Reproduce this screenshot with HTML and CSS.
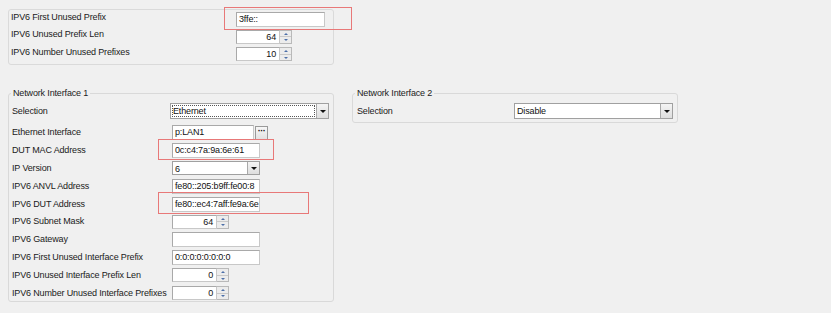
FILE: index.html
```html
<!DOCTYPE html>
<html>
<head>
<meta charset="utf-8">
<link rel="stylesheet" href="styles.css">
</head>
<body>
<div class="page">
  <div class="panel">
    <div class="row prow first">
      <span class="lbl plbl">IPV6 First Unused Prefix</span>
      <span class="field wide">3ffe::</span>
    </div>
    <div class="row prow">
      <span class="lbl plbl">IPV6 Unused Prefix Len</span>
      <span class="spin"><span class="field num">64</span><span class="spinbtns"><i class="up"></i><i class="dn"></i></span></span>
    </div>
    <div class="row prow">
      <span class="lbl plbl">IPV6 Number Unused Prefixes</span>
      <span class="spin"><span class="field num">10</span><span class="spinbtns"><i class="up"></i><i class="dn"></i></span></span>
    </div>
  </div>

  <div class="groups">
    <fieldset class="group g1">
      <legend>Network Interface 1</legend>
      <div class="row selrow">
        <span class="lbl lbl1 narrow">Selection</span>
        <span class="combo"><span class="combotext focus">Ethernet</span><span class="arrowbtn"><i></i></span></span>
      </div>
      <div class="rows">
        <div class="row grow">
          <span class="lbl lbl1">Ethernet Interface</span>
          <span class="field eth">p:LAN1</span><span class="dots">&middot;&middot;&middot;</span>
        </div>
        <div class="row grow">
          <span class="lbl lbl1">DUT MAC Address</span>
          <span class="field mid">0c:c4:7a:9a:6e:61</span>
        </div>
        <div class="row grow">
          <span class="lbl lbl1">IP Version</span>
          <span class="combo small"><span class="combotext">6</span><span class="arrowbtn"><i></i></span></span>
        </div>
        <div class="row grow">
          <span class="lbl lbl1">IPV6 ANVL Address</span>
          <span class="field mid">fe80::205:b9ff:fe00:8</span>
        </div>
        <div class="row grow">
          <span class="lbl lbl1">IPV6 DUT Address</span>
          <span class="field mid">fe80::ec4:7aff:fe9a:6e</span>
        </div>
        <div class="row grow">
          <span class="lbl lbl1">IPV6 Subnet Mask</span>
          <span class="spin"><span class="field num">64</span><span class="spinbtns"><i class="up"></i><i class="dn"></i></span></span>
        </div>
        <div class="row grow">
          <span class="lbl lbl1">IPV6 Gateway</span>
          <span class="field mid"></span>
        </div>
        <div class="row grow">
          <span class="lbl lbl1">IPV6 First Unused Interface Prefix</span>
          <span class="field mid">0:0:0:0:0:0:0:0</span>
        </div>
        <div class="row grow">
          <span class="lbl lbl1">IPV6 Unused Interface Prefix Len</span>
          <span class="spin"><span class="field num">0</span><span class="spinbtns"><i class="up"></i><i class="dn"></i></span></span>
        </div>
        <div class="row grow">
          <span class="lbl lbl1">IPV6 Number Unused Interface Prefixes</span>
          <span class="spin"><span class="field num">0</span><span class="spinbtns"><i class="up"></i><i class="dn"></i></span></span>
        </div>
      </div>
    </fieldset>

    <fieldset class="group g2">
      <legend>Network Interface 2</legend>
      <div class="row selrow">
        <span class="lbl lbl2">Selection</span>
        <span class="combo"><span class="combotext">Disable</span><span class="arrowbtn"><i></i></span></span>
      </div>
    </fieldset>
  </div>

  <div class="mark m1"></div>
  <div class="mark m2"></div>
  <div class="mark m3"></div>
</div>
</body>
</html>
```

FILE: styles.css
```css
* { box-sizing: border-box; }
html, body {
  margin: 0;
  padding: 0;
  background: #f0f0f0;
}
body {
  font-family: "Liberation Sans", Arial, sans-serif;
  font-size: 9px;
  letter-spacing: -0.15px;
  color: #1a1a1a;
}
.page {
  position: relative;
  width: 831px;
  height: 313px;
  padding: 9px 0 0 8px;
}

/* top panel */
.panel {
  width: 326px;
  height: 56px;
  border: 1px solid #dadada;
  border-radius: 3px;
  padding: 0 0 0 2px;
}
.row {
  display: flex;
  align-items: center;
}
.prow { height: 17.5px; }
.prow.first { height: 18px; }
.lbl {
  flex: none;
  line-height: 11px;
  white-space: nowrap;
}
.plbl {
  width: 225px;
  padding-bottom: 4px;
}

/* fields */
.field {
  flex: none;
  display: block;
  height: 15px;
  line-height: 13px;
  background: #fff;
  border: 1px solid #a9a9a9;
  border-right-color: #c8c8c8;
  border-bottom-color: #c8c8c8;
  padding: 0 2px;
  white-space: nowrap;
  overflow: hidden;
  color: #111;
}
.wide { width: 89px; }
.mid { width: 88px; }
.eth { width: 82px; }
.spin {
  flex: none;
  display: flex;
  height: 14px;
}
.spin .field {
  height: 14px;
  line-height: 12px;
}
.num {
  width: 45px;
  text-align: right;
  padding-right: 3px;
}
.prow .num { width: 44px; }
.spinbtns {
  width: 12px;
  height: 14px;
  display: flex;
  flex-direction: column;
  border: 1px solid #b9b9b9;
  border-left: none;
  background: #ececec;
}
.spinbtns i {
  flex: 1;
  display: flex;
  align-items: center;
  justify-content: center;
}
.spinbtns i.up { border-bottom: 1px solid #c9c9c9; }
.spinbtns i::after {
  content: "";
  width: 0;
  height: 0;
  border-left: 2px solid transparent;
  border-right: 2px solid transparent;
}
.spinbtns i.up::after { border-bottom: 2px solid #4c6fa8; }
.spinbtns i.dn::after { border-top: 2px solid #4c6fa8; }

.dots {
  flex: none;
  width: 13px;
  height: 14px;
  margin-left: 1px;
  border: 1px solid #9a9a9a;
  background: linear-gradient(#f7f7f7, #e2e2e2);
  font-weight: bold;
  font-size: 9px;
  line-height: 9px;
  text-align: center;
  letter-spacing: -0.5px;
  color: #111;
}

/* combo */
.combo {
  flex: none;
  display: flex;
  width: 159px;
  height: 16px;
  background: #fff;
  border: 1px solid #a0a0a0;
}
.combo.small {
  width: 88px;
  height: 14px;
}
.combotext {
  flex: 1;
  line-height: 12px;
  padding: 0 1px;
  margin: 1px;
  white-space: nowrap;
  color: #111;
}
.combotext.focus { outline: 1px dotted #555; outline-offset: -1px; }
.arrowbtn {
  flex: none;
  width: 12px;
  display: flex;
  align-items: center;
  justify-content: center;
  border-left: 1px solid #a9a9a9;
  background: linear-gradient(#f4f4f4, #dedede);
}
.arrowbtn i {
  width: 0;
  height: 0;
  border-left: 3px solid transparent;
  border-right: 3px solid transparent;
  border-top: 3px solid #111;
}

/* groups */
.groups {
  display: flex;
  gap: 18px;
  margin-top: 23px;
  align-items: flex-start;
}
.group {
  margin: 0;
  width: 326px;
  border: 1px solid #d9d9d9;
  border-radius: 3px;
  padding: 3px 0 0 3px;
  min-width: 0;
}
.group legend {
  margin-left: -1px;
  padding: 0 2px;
  line-height: 11px;
  color: #222;
}
.selrow { height: 18px; }
.lbl1 { width: 160px; }
.lbl1.narrow { width: 158px; }
.rows {
  margin-top: 4px;
  height: 178px;
  overflow: hidden;
}
.grow { height: 17.8px; }
.g1 { height: 214px; }
.g2 {
  padding-left: 4px;
  padding-bottom: 2px;
}
.g2 legend { margin-left: -2px; }
.lbl2 { width: 157px; }

/* annotation marks */
.mark {
  position: absolute;
  border: 1px solid #e87878;
}
.m1 { left: 224px; top: 7px; width: 128px; height: 23px; }
.m2 { left: 158px; top: 139px; width: 116px; height: 21px; }
.m3 { left: 158px; top: 192px; width: 151px; height: 22px; }
```
